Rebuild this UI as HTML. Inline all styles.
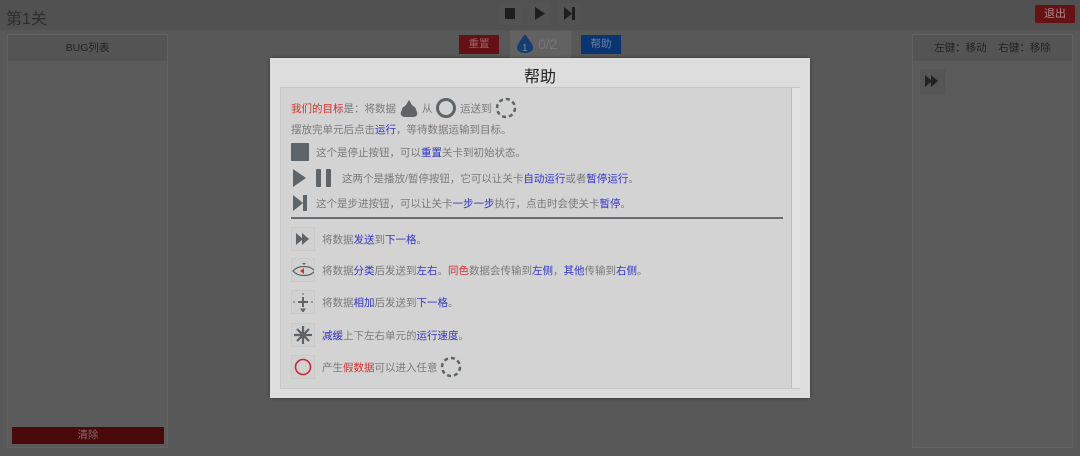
<!DOCTYPE html>
<html><head><meta charset="utf-8"><style>
*{margin:0;padding:0;box-sizing:border-box}
body{width:1080px;height:456px;overflow:hidden;background:#575857;font-family:"Liberation Sans","Noto Sans CJK SC",sans-serif;position:relative}
.a{position:absolute}
.b{color:#3434c8}.r{color:#d63030}
.row{position:absolute;left:291px;font-size:10.5px;color:#7a7a7a;display:flex;align-items:center;white-space:nowrap}
.ib{width:24px;height:24px;background:#d0d1d0;border:1px solid #c8c9c8;display:flex;align-items:center;justify-content:center;margin-right:7px}
</style></head><body>
<div class="a" style="left:0;top:0;width:1080px;height:30px;background:#505150"></div>
<div class="a" style="left:6px;top:5px;font-size:16px;color:#2e2e2e">第1关</div>
<div class="a" style="left:499px;top:3px;width:22px;height:22px;background:#525352"></div>
<div class="a" style="left:528px;top:3px;width:22px;height:22px;background:#525352"></div>
<div class="a" style="left:558px;top:3px;width:22px;height:22px;background:#525352"></div>
<div class="a" style="left:505px;top:8px;width:10px;height:11px;background:#1e1e1e"></div>
<svg class="a" style="left:534px;top:7px" width="12" height="13"><path d="M1 0L11 6.5L1 13Z" fill="#1e1e1e"/></svg>
<svg class="a" style="left:564px;top:7px" width="12" height="13"><path d="M0 0L8 6.5L0 13Z M8 0h3v13h-3Z" fill="#1e1e1e"/></svg>
<div class="a" style="left:1035px;top:5px;width:40px;height:18px;background:#661214;border-radius:2px;color:#a88;font-size:11px;text-align:center;line-height:18px">退出</div>
<div class="a" style="left:7px;top:34px;width:161px;height:414px;background:#5a5b5a;border:1px solid #616261"></div>
<div class="a" style="left:8px;top:35px;width:159px;height:26px;background:#535453;color:#222;font-size:10.5px;text-align:center;line-height:26px">BUG列表</div>
<div class="a" style="left:12px;top:427px;width:152px;height:17px;background:#4a0a0c;color:#866;font-size:10.5px;text-align:center;line-height:17px">清除</div>
<div class="a" style="left:912px;top:34px;width:161px;height:414px;background:#5a5b5a;border:1px solid #616261"></div>
<div class="a" style="left:913px;top:35px;width:159px;height:26px;background:#535453;color:#222;font-size:10.5px;text-align:center;line-height:26px">左键：移动&nbsp;&nbsp;&nbsp;&nbsp;右键：移除</div>
<div class="a" style="left:920px;top:69px;width:25px;height:25px;background:#545554"></div>
<svg class="a" style="left:925px;top:75px" width="14" height="12"><path d="M0 0L7 6L0 12Z M6 0L13 6L6 12Z" fill="#222"/></svg>
<div class="a" style="left:459px;top:35px;width:40px;height:19px;background:#641014;color:#966;font-size:10.5px;text-align:center;line-height:19px">重置</div>
<div class="a" style="left:510px;top:31px;width:61px;height:27px;background:#616261"></div>
<svg class="a" style="left:514px;top:32px" width="22" height="22"><path d="M11 2C7 8 3 12 3 16a8 5 0 0 0 16 0C19 12 15 8 11 2Z" fill="#163d70"/><text x="8" y="19" font-size="10" fill="#7a8aa0" font-family="Liberation Sans">1</text></svg>
<div class="a" style="left:538px;top:36px;color:#757575;font-size:14px">0/2</div>
<div class="a" style="left:581px;top:35px;width:40px;height:19px;background:#0b3572;color:#6a7f9f;font-size:10.5px;text-align:center;line-height:19px">帮助</div>

<div class="a" style="left:270px;top:58px;width:540px;height:340px;background:#dcdddc;box-shadow:0 0 3px rgba(0,0,0,.4)"></div>
<div class="a" style="left:270px;top:63px;width:540px;text-align:center;font-size:16px;color:#222">帮助</div>
<div class="a" style="left:280px;top:87px;width:520px;height:302px;background:#d2d3d2;border:1px solid #c6c7c6"></div>
<div class="a" style="left:791px;top:88px;width:9px;height:300px;background:#e2e2e2;border-left:1px solid #bbb"></div>
<div class="a" style="left:291px;top:217px;width:492px;height:2px;background:#6a6d70"></div>

<div class="row" style="top:97px"><span class="r">我们的目标</span>是：将数据&nbsp;
<svg width="20" height="18"><path d="M10 1c-2 3-2 4-4 6-3 1-3 4-4 6-1 3 1 5 4 5h8c3 0 5-2 4-5-1-2-1-5-4-6-2-2-2-3-4-6Z" fill="#5e6468"/></svg>
&nbsp;从&nbsp;<svg width="22" height="22"><circle cx="11" cy="11" r="8.5" stroke="#5e6468" stroke-width="3" fill="none"/></svg>
&nbsp;运送到&nbsp;<svg width="22" height="22"><circle cx="11" cy="11" r="9" stroke="#5e6468" stroke-width="2.5" fill="none" stroke-dasharray="4 3"/></svg></div>
<div class="row" style="top:122px">摆放完单元后点击<span class="b">运行</span>，等待数据运输到目标。</div>
<div class="row" style="top:143px"><svg width="18" height="18" style="margin-right:7px"><rect width="18" height="18" rx="1" fill="#5e6468"/></svg>这个是停止按钮，可以<span class="b">重置</span>关卡到初始状态。</div>
<div class="row" style="top:168px"><svg width="46" height="20" style="margin-right:5px"><path d="M2 1L15 10L2 19Z" fill="#5e6468"/><rect x="25" y="1" width="5" height="18" rx="1" fill="#5e6468"/><rect x="35" y="1" width="5" height="18" rx="1" fill="#5e6468"/></svg>这两个是播放/暂停按钮，它可以让关卡<span class="b">自动运行</span>或者<span class="b">暂停运行</span>。</div>
<div class="row" style="top:194px"><svg width="18" height="18" style="margin-right:7px"><path d="M2 1L12 9L2 17Z M12 1h4v16h-4Z" fill="#5e6468"/></svg>这个是步进按钮，可以让关卡<span class="b">一步一步</span>执行，点击时会使关卡<span class="b">暂停</span>。</div>

<div class="row" style="top:227px"><div class="ib"><svg width="14" height="12"><path d="M0 0L7 6L0 12Z M6 0L13 6L6 12Z" fill="#5e6468"/></svg></div>将数据<span class="b">发送</span>到<span class="b">下一格</span>。</div>
<div class="row" style="top:258px"><div class="ib"><svg width="24" height="18"><path d="M1 10C6 4 18 4 23 10C18 16 6 16 1 10Z" stroke="#5e6468" fill="none" stroke-width="1.3"/><path d="M8 10L12 7V13Z" fill="#d63030"/><path d="M10 2h4l-2 2Z" fill="#5e6468"/></svg></div>将数据<span class="b">分类</span>后发送到<span class="b">左右</span>。<span class="r">同色</span>数据会传输到<span class="b">左侧</span>，<span class="b">其他</span>传输到<span class="b">右侧</span>。</div>
<div class="row" style="top:290px"><div class="ib"><svg width="20" height="20"><path d="M10 5v10M5 10h10" stroke="#5e6468" stroke-width="2"/><path d="M8 17h4l-2 3Z M1 9v2 M19 9v2 M10 1v2" stroke="#5e6468" fill="#5e6468"/></svg></div>将数据<span class="b">相加</span>后发送到<span class="b">下一格</span>。</div>
<div class="row" style="top:323px"><div class="ib"><svg width="20" height="20"><path d="M10 1v18M1 10h18M4 4l12 12M16 4L4 16" stroke="#5e6468" stroke-width="2.2"/><circle cx="10" cy="10" r="3.5" fill="#5e6468"/></svg></div><span class="b">减缓</span>上下左右单元的<span class="b">运行速度</span>。</div>
<div class="row" style="top:355px"><div class="ib"><svg width="20" height="20"><circle cx="10" cy="10" r="7.5" stroke="#c8283a" stroke-width="1.6" fill="none"/></svg></div>产生<span class="r">假数据</span>可以进入任意&nbsp;<svg width="22" height="22"><circle cx="11" cy="11" r="9" stroke="#5e6468" stroke-width="2.5" fill="none" stroke-dasharray="4 3"/></svg></div>
</body></html>
